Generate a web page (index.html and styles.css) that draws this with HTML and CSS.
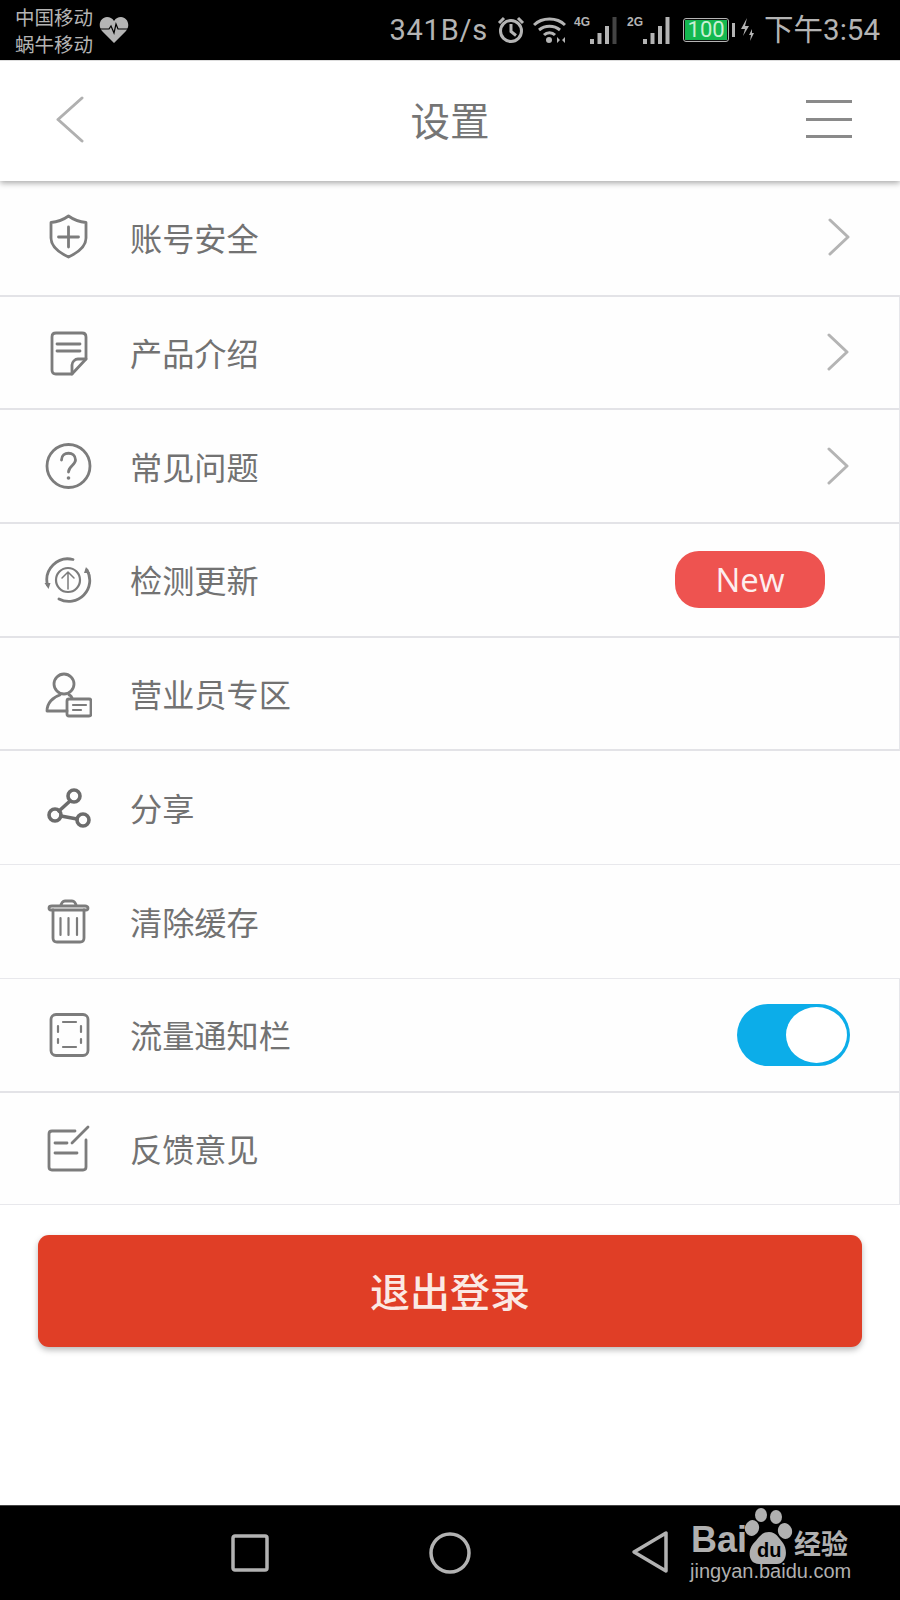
FILE: index.html
```html
<!DOCTYPE html>
<html lang="zh-CN">
<head>
<meta charset="utf-8">
<title>设置</title>
<link rel="stylesheet" href="styles.css">
</head>
<body>
<div class="page">
  <div class="status">
    <div class="carriers"><span>中国移动</span><span>蜗牛移动</span></div>
    <svg class="heart" width="30" height="28" viewBox="0 0 30 28"><path class="fill-g" d="M15 27 3 15C-2 9 2 1 8 1c3 0 5 1 7 4 2-3 4-4 7-4 6 0 10 8 5 14Z"/><path class="line-k" d="M1 13h9l2-3 3 7 2-9 2 5h10"/></svg>
    <div class="status-right">
      <span class="speed">341B/s</span>
      <svg class="st-alarm" width="28" height="28" viewBox="0 0 28 28"><circle class="line-g" cx="14" cy="15" r="10.5"/><path class="line-g" d="M14 8v7.500l5 4M2 7l5-5M26 7l-5-5"/></svg>
      <svg class="st-wifi" width="33" height="28" viewBox="0 0 33 28"><path class="line-g" d="M1 9C9 1 24 1 32 9M6 14c6-5 15-5 21 0M11 19c3-3 8-3 11 0"/><circle class="fill-g" cx="16" cy="24" r="3"/><path class="fill-g" d="M24 21v6l3-3ZM32 21v6l-3-3Z"/></svg>
      <div class="net net-4g">
        <span class="net-label">4G</span>
        <svg width="29" height="28" viewBox="0 0 29 28"><rect class="fill-g" x="1" y="23" width="4" height="5"/><rect class="fill-g" x="8.500" y="17" width="4" height="11"/><rect class="fill-g" x="16" y="10" width="4" height="18"/><rect class="fill-d" x="23.500" y="1" width="4" height="27"/></svg>
      </div>
      <div class="net net-2g">
        <span class="net-label">2G</span>
        <svg width="29" height="28" viewBox="0 0 29 28"><rect class="fill-g" x="1" y="23" width="4" height="5"/><rect class="fill-g" x="8.500" y="17" width="4" height="11"/><rect class="fill-g" x="16" y="10" width="4" height="18"/><rect class="fill-g" x="23.500" y="1" width="4" height="27"/></svg>
      </div>
      <div class="battery"><span class="battery-level">100</span></div>
      <span class="battery-nub"></span>
      <svg class="st-bolt" width="15" height="24" viewBox="0 0 15 24"><path class="fill-g" d="M7 0 1 11h4l-2 7 6-10H5ZM12 11l-3 6h2l-1 6 4-8h-2Z"/></svg>
      <span class="clock">下午3:54</span>
    </div>
  </div>

  <header class="topbar">
    <svg class="back" width="29" height="47" viewBox="0 0 29 47"><path d="M27 2 3 23.500 27 45"/></svg>
    <h1 class="title">设置</h1>
    <div class="menu"><span></span><span></span><span></span></div>
  </header>

  <main class="list">
    <div class="row thick first">
      <svg class="icon" width="48" height="48" viewBox="0 0 48 48"><path d="M24.500 2C30 6 36 8 42 8.500V24c0 9-9 15-17.500 19C16 39 7 33 7 24V8.500C13 8 19 6 24.500 2Z"/><path d="M24.500 13v20M14.500 23h20"/></svg>
      <span class="label">账号安全</span>
      <svg class="chev" width="23" height="38" viewBox="0 0 23 38"><path d="M3 2l18 17L3 36"/></svg>
    </div>
    <div class="row thick edge">
      <svg class="icon" width="48" height="48" viewBox="0 0 48 48"><path d="M28 45H12c-2.500 0-4-1.500-4-4V8c0-2.500 1.500-4 4-4h26c2.500 0 4 1.500 4 4v22Z"/><path d="M13 15h23M13 22h23M42 30H34c-3 0-6 3-6 6v9"/></svg>
      <span class="label">产品介绍</span>
      <svg class="chev" width="23" height="38" viewBox="0 0 23 38"><path d="M3 2l18 17L3 36"/></svg>
    </div>
    <div class="row thick edge">
      <svg class="icon" width="48" height="48" viewBox="0 0 48 48"><circle cx="24.500" cy="24" r="21.500"/><path d="M17.500 18c0-9 14-9 14 0 0 5-7 6-7 12"/><circle class="dot" cx="24.500" cy="36" r="1.800"/></svg>
      <span class="label">常见问题</span>
      <svg class="chev" width="23" height="38" viewBox="0 0 23 38"><path d="M3 2l18 17L3 36"/></svg>
    </div>
    <div class="row thick edge">
      <svg class="icon" width="48" height="48" viewBox="0 0 48 48"><path d="M29 3.500A21 21 0 0 0 3.500 29M15 43A21 21 0 0 0 43 14"/><path class="dot" d="M.5 27l6 0-2 6ZM46 17l-6 0 2-6Z"/><circle class="thin" cx="24" cy="24" r="12"/><path class="fine" d="M24 33V16M18 22l6-6 6 6"/></svg>
      <span class="label">检测更新</span>
      <span class="badge">New</span>
    </div>
    <div class="row thick edge">
      <svg class="icon" width="48" height="48" viewBox="0 0 48 48"><circle cx="20" cy="14" r="10"/><path d="M23 41H3c0-8 6-14 13-16M25 25c1 0 2 1 3 3"/><rect x="23" y="29" width="24" height="17" rx="2"/><path class="thin" d="M29 35h13M29 40h8"/></svg>
      <span class="label">营业员专区</span>
    </div>
    <div class="row">
      <svg class="icon heavy" width="48" height="48" viewBox="0 0 48 48"><circle cx="30" cy="12" r="6"/><circle cx="11" cy="31" r="6"/><circle cx="39" cy="36" r="6"/><path d="M26 17 15 27M17 32l16 3"/></svg>
      <span class="label">分享</span>
    </div>
    <div class="row">
      <svg class="icon" width="48" height="48" viewBox="0 0 48 48"><path d="M9 13v28c0 2.500 1.500 4 4 4h23c2.500 0 4-1.500 4-4V13"/><path d="M7 13h35c1.500 0 2-1 2-2s-1-2-3-2H8C6 9 5 10 5 11s.5 2 2 2ZM17 9c0-3 2-5 4-5h7c2 0 4 2 4 5"/><path class="thin" d="M16.500 21v17M24.500 21v17M33 21v17"/></svg>
      <span class="label">清除缓存</span>
    </div>
    <div class="row thick edge">
      <svg class="icon" width="48" height="48" viewBox="0 0 48 48"><rect x="7" y="3.500" width="37" height="41" rx="5"/><path class="thin" d="M19 11h13M19 36h13M14 15v6M37 15v6M14 28v4M37 28v4"/></svg>
      <span class="label">流量通知栏</span>
      <span class="toggle"><span class="knob"></span></span>
    </div>
    <div class="row edge last">
      <svg class="icon" width="48" height="48" viewBox="0 0 48 48"><path d="M31 7H8c-2 0-3 1-3 3v33c0 2 1 3 3 3h31c2 0 3-1 3-3V16"/><path d="M28 19 44 3M11 19h12M11 29h22"/></svg>
      <span class="label">反馈意见</span>
    </div>
  </main>

  <div class="actions">
    <button class="logout" type="button">退出登录</button>
  </div>

  <nav class="navbar">
    <svg class="nav-square" width="38" height="38" viewBox="0 0 38 38"><rect class="nav-line" x="2" y="2" width="34" height="34" rx="2"/></svg>
    <svg class="nav-circle" width="42" height="42" viewBox="0 0 42 42"><circle class="nav-line" cx="21" cy="21" r="19"/></svg>
    <svg class="nav-tri" width="38" height="44" viewBox="0 0 38 44"><path class="nav-line" d="M35 3V41L3 22Z"/></svg>
    <div class="baidu">
      <span class="bai">Bai</span>
      <svg class="paw" width="50" height="58" viewBox="0 0 50 58"><ellipse class="fill-b" cx="17" cy="7" rx="6" ry="7"/><ellipse class="fill-b" cx="32" cy="9" rx="6" ry="7"/><ellipse class="fill-b" cx="8" cy="20" rx="7" ry="8" transform="rotate(20 8 20)"/><ellipse class="fill-b" cx="41" cy="23" rx="7" ry="8" transform="rotate(-20 41 23)"/><path class="fill-b" d="M25 24c7 0 9 5 14 11 5 7 4 21-6 21H15C5 56 3 44 9 36c6-6 8-12 16-12Z"/></svg>
      <span class="du">du</span>
      <span class="jy">经验</span>
      <span class="site">jingyan.baidu.com</span>
    </div>
  </nav>
</div>
</body>
</html>
```

FILE: styles.css
```css
* { box-sizing: border-box; }
html, body { margin: 0; padding: 0; background: #fff; }
.page {
  width: 900px;
  height: 1600px;
  display: flex;
  flex-direction: column;
  overflow: hidden;
  position: relative;
  font-family: "Noto Sans CJK SC", "Liberation Sans", sans-serif;
}

/* status bar */
.status {
  height: 60px;
  flex: none;
  background: #000;
  color: #b4b4b4;
  display: flex;
  align-items: center;
  padding-left: 15px;
}
.carriers {
  display: flex;
  flex-direction: column;
  font-size: 19.5px;
  line-height: 27px;
  padding-bottom: 1px;
}
.heart { margin: 0 0 0 6px; }
.fill-g { fill: #b4b4b4; }
.fill-d { fill: #444; }
.fill-b { fill: #b0b0b0; }
.line-g { fill: none; stroke: #b4b4b4; stroke-width: 3; }
.line-k { fill: none; stroke: #000; stroke-width: 1.2; }
.status-right {
  margin-left: auto;
  display: flex;
  align-items: center;
  padding-right: 20px;
}
.speed, .clock {
  font-family: Roboto, "Noto Sans CJK SC", sans-serif;
  font-size: 29px;
  line-height: 60px;
}
.clock { font-size: 29.500px; }
.speed { letter-spacing: .8px; }
.st-alarm { margin-left: 9px; }
.st-wifi { margin-left: 8px; }
.net { display: flex; align-items: flex-start; height: 28px; }
.net-4g { margin-left: 8px; }
.net-2g { margin-left: 9px; }
.net-label {
  font-family: "Liberation Sans", sans-serif;
  font-weight: 700;
  font-size: 12px;
  line-height: 12px;
  width: 15px;
}
.battery {
  margin-left: 12px;
  width: 46px;
  height: 24px;
  border: 1.5px solid #b4b4b4;
  border-radius: 3px;
  background: #0c0c0c;
  padding: 1px;
  display: flex;
}
.battery-level {
  flex: 1;
  background: #14b850;
  color: #c8f0d4;
  font-family: Roboto, sans-serif;
  font-size: 22px;
  line-height: 19px;
  text-align: center;
}
.battery-nub {
  width: 3px;
  height: 14px;
  margin-left: 3px;
  background: #b4b4b4;
}
.st-bolt { margin-left: 5px; }
.clock { margin-left: 9px; }

/* top bar */
.topbar {
  height: 121px;
  flex: none;
  background: #fff;
  border-top: 1px solid #ddd;
  display: grid;
  grid-template-columns: 1fr auto 1fr;
  align-items: center;
  padding: 0 48px 4px;
  box-shadow: 0 2px 6px rgba(0, 0, 0, .35);
  position: relative;
  z-index: 1;
}
.back { justify-self: start; margin-left: 7px; }
.back path { fill: none; stroke: #b0b0b0; stroke-width: 3; stroke-linecap: round; stroke-linejoin: round; }
.title {
  margin: 0;
  font-size: 39.500px;
  font-weight: 400;
  line-height: 50px;
  color: #757575;
}
.menu {
  justify-self: end;
  width: 46px;
  display: flex;
  flex-direction: column;
  gap: 14.500px;
}
.menu span { height: 3px; background: #8a8a8a; }

/* list */
.list { display: flex; flex-direction: column; background: #fefefe; }
.row {
  height: 113.700px;
  flex: none;
  display: flex;
  align-items: center;
  padding: 0 50px 0 44px;
  border-bottom: 1px solid #e8e8ec;
}
.row.first { height: 115.700px; }
.row.last { height: 112.700px; }
.thick { border-bottom: 2px solid #e3e3e7; }
.edge { border-right: 1px solid #e6e6ea; }
.icon { flex: none; margin-right: 38px; }
.icon path, .icon circle, .icon rect {
  fill: none;
  stroke: #7c7c7c;
  stroke-width: 2.800;
  stroke-linecap: round;
  stroke-linejoin: round;
}
.icon .dot { fill: #7c7c7c; stroke: none; }
.icon .thin { stroke-width: 2.200; }
.icon .fine { stroke-width: 1.500; }
.icon.heavy path, .icon.heavy circle { stroke: #6c6c6c; stroke-width: 3.600; }
.label {
  font-size: 32.200px;
  line-height: 44px;
  color: #727272;
  margin-bottom: 1px;
}
.chev { margin-left: auto; margin-bottom: 1px; flex: none; }
.chev path { fill: none; stroke: #b4b4b4; stroke-width: 3; stroke-linecap: round; stroke-linejoin: round; }
.badge {
  margin-left: auto;
  margin-right: 24px;
  width: 150px;
  height: 57px;
  border-radius: 24px;
  background: #ee5350;
  color: #fdeeee;
  font-family: "Open Sans", "Liberation Sans", sans-serif;
  font-size: 33px;
  line-height: 57px;
  text-align: center;
}
.toggle {
  margin-left: auto;
  margin-right: -1px;
  width: 113px;
  height: 62px;
  border-radius: 31px;
  background: #0cade9;
  display: flex;
  align-items: center;
  justify-content: flex-end;
  padding-right: 3px;
}
.knob { width: 61px; height: 56px; border-radius: 50%; background: #fff; }

/* button */
.actions { padding: 30px 38px 0; flex: none; }
.logout {
  display: block;
  width: 100%;
  height: 112px;
  padding: 0 0 2px;
  border: 0;
  border-radius: 11px;
  background: #e03e26;
  color: #fbe9e4;
  font-family: inherit;
  font-size: 40px;
  font-weight: 500;
  box-shadow: 0 3px 6px rgba(0, 0, 0, .28);
}

/* bottom bar */
.navbar {
  position: relative;
  margin-top: auto;
  height: 95px;
  flex: none;
  background: #000;
  border-top: 1px solid #444;
  display: flex;
  align-items: center;
  padding: 0 0 0 231px;
}
.nav-line { fill: none; stroke: #b2b2b2; stroke-width: 3.500; stroke-linejoin: round; }
.nav-circle { margin-left: 160px; }
.nav-tri { margin-left: 160px; margin-bottom: 2px; }
.baidu { position: absolute; left: 0; top: 0; width: 900px; height: 95px; color: #b0b0b0; }
.baidu span { position: absolute; white-space: nowrap; }
.paw { position: absolute; left: 744px; top: 2px; }
.bai {
  left: 691px;
  top: 16px;
  font-family: "Liberation Sans", sans-serif;
  font-weight: 700;
  font-size: 36px;
  line-height: 36px;
}
.du {
  left: 757px;
  top: 32px;
  color: #000;
  font-family: "Liberation Sans", sans-serif;
  font-weight: 700;
  font-size: 20px;
  line-height: 24px;
}
.jy {
  left: 794px;
  top: 22px;
  font-size: 27px;
  font-weight: 700;
  line-height: 30px;
}
.site {
  left: 690px;
  top: 54px;
  font-family: "Liberation Sans", sans-serif;
  font-size: 20px;
  line-height: 22px;
}
```
